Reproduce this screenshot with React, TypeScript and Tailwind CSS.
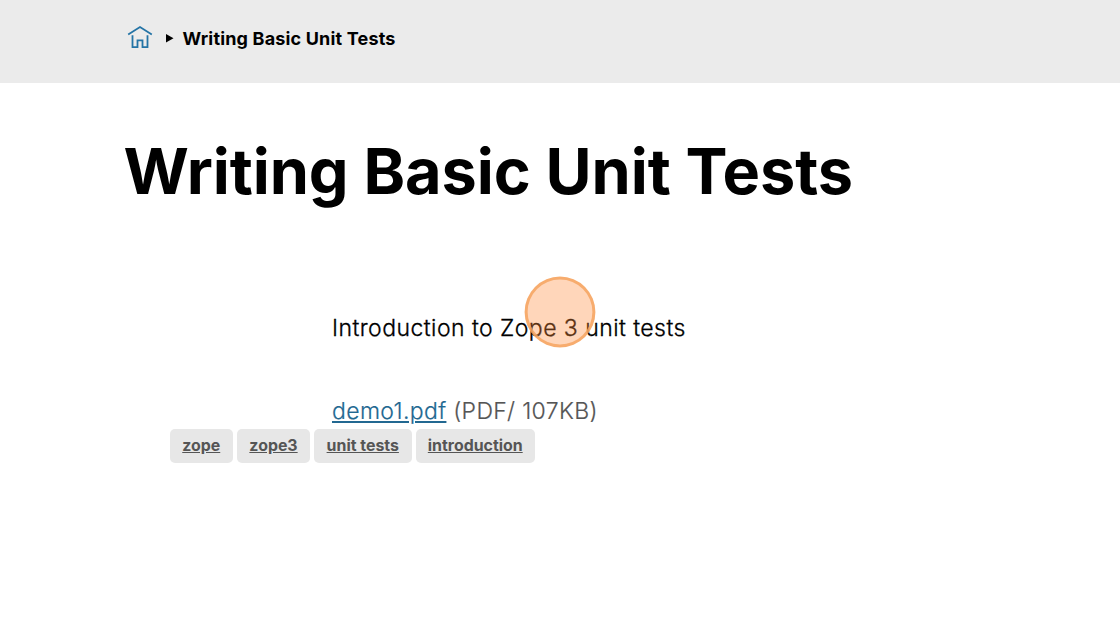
const tags = [
  { label: "zope", width: "w-[63.500px]" },
  { label: "zope3", width: "w-[73px]" },
  { label: "unit tests", width: "w-[97.500px]" },
  { label: "introduction", width: "w-[119.500px]" },
];

export default function App() {
  return (
    <div className="relative h-[626px] w-[1120px] overflow-hidden bg-white font-['Inter',sans-serif] text-black">
      <header className="flex h-[83px] bg-[#ebebeb] pl-[127px] pt-6">
        <nav className="flex h-7 items-center">
          <a className="text-[#2474a6]" aria-label="Home">
            <svg width="26" height="26" viewBox="0 0 26 26" fill="none" stroke="currentColor" strokeWidth="1.8">
              <path d="M1.200 9.500 13 2l11.800 7.500M5.500 10.300V22.200h5v-6.900h5v6.900h5V10.300" />
            </svg>
          </a>
          <svg className="ml-[13px] mt-px" width="8" height="9" viewBox="0 0 8 9" fill="currentColor">
            <path d="M0 0 7.500 4.300 0 8.600Z" />
          </svg>
          <span className="ml-[8.500px] whitespace-nowrap text-[18px] font-bold tracking-[0.17px]">Writing Basic Unit Tests</span>
        </nav>
      </header>
      <main>
        <h1 className="ml-[123.500px] mt-12 h-20 whitespace-nowrap text-[63px] leading-[80px] font-bold tracking-[-0.08px]">Writing Basic Unit Tests</h1>
        <p className="ml-[332px] mt-[101px] h-8 whitespace-nowrap text-[23px] leading-8 font-light tracking-[0.45px] [-webkit-text-stroke:0.3px]">Introduction to Zope 3 unit tests</p>
        <p className="ml-[332px] mt-[51px] h-8 whitespace-nowrap text-[23px] leading-8 font-light tracking-[0.35px] text-[#555] [-webkit-text-stroke:0.2px]">
          <a className="text-[#226891] underline">demo1.pdf</a> (PDF/ 107KB)
        </p>
        <div className="ml-[169.500px] mt-0.5 flex gap-1">
          {tags.map(({ label, width }) => (
            <a key={label} className={`flex h-[33.500px] items-center justify-center whitespace-nowrap rounded-[5px] bg-[#e7e7e7] text-[15.900px] leading-6 font-bold text-[#555] underline ${width}`}>{label}</a>
          ))}
        </div>
      </main>
      <div className="absolute left-[525px] top-[277px] size-[70px] scale-[1.012] rounded-full border-[3px] border-[#f6a460]/85 bg-[#ff8a38]/35" />
    </div>
  );
}
